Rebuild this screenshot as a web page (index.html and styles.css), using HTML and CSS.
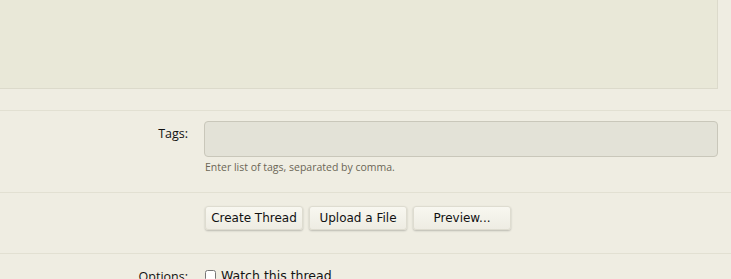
FILE: index.html
```html
<!DOCTYPE html>
<html lang="en">
<head>
    <meta charset="UTF-8">
    <title>Create Thread</title>
    <link rel="stylesheet" href="styles.css">
</head>
<body>
    <div class="editor-row">
        <div class="editor"></div>
    </div>

    <dl class="ctrl-unit tags-unit">
        <dt>Tags:</dt>
        <dd>
            <input type="text" class="text-ctrl">
            <p class="explain">Enter list of tags, separated by comma.</p>
        </dd>
    </dl>

    <dl class="ctrl-unit submit-unit">
        <dt></dt>
        <dd>
            <button class="button">Create Thread</button>
            <button class="button">Upload a File</button>
            <button class="button">Preview...</button>
        </dd>
    </dl>

    <dl class="ctrl-unit options-unit">
        <dt>Options:</dt>
        <dd>
            <label class="check"><input type="checkbox"> Watch this thread</label>
        </dd>
    </dl>
</body>
</html>
```

FILE: styles.css
```css
/* Page */
body {
    margin: 0;
    background-color: #efede2;
    font-family: 'DejaVu Sans', sans-serif;
    color: #141414;
    overflow: hidden;
}

.editor-row {
    height: 110px;
    border-bottom: 1px solid #e2e0d2;
}

.editor {
    width: 717px;
    height: 88px;
    background-color: #e9e8d8;
    border-right: 1px solid #dcdacb;
    border-bottom: 1px solid #dcdacb;
}

/* Form rows */
.ctrl-unit {
    display: flex;
    margin: 0;
    border-bottom: 1px solid #e2e0d2;
}

.ctrl-unit dt {
    width: 188px;
    text-align: right;
    font-family: 'Open Sans', sans-serif;
    font-size: 12.5px;
    color: #111;
}

.ctrl-unit dd {
    margin: 0 0 0 16px;
    flex: 1;
}

.tags-unit {
    height: 81px;
}

.tags-unit dt {
    margin-top: 14px;
}

.tags-unit dd {
    padding-top: 10px;
}

.text-ctrl {
    display: block;
    box-sizing: border-box;
    width: 514px;
    height: 36px;
    margin: 0;
    background-color: #e3e2d7;
    border: 1px solid #c9c7ba;
    border-radius: 4px;
}

.explain {
    margin: 3px 0 0 1px;
    font-family: 'Open Sans', sans-serif;
    font-size: 10.5px;
    color: #6b6656;
}

.submit-unit {
    height: 60px;
}

.submit-unit dd {
    display: flex;
    gap: 6px;
    padding-top: 13px;
    padding-left: 1px;
}

.button {
    width: 98px;
    height: 24px;
    padding: 0;
    font-family: 'DejaVu Sans', sans-serif;
    font-size: 12px;
    color: #111;
    background: linear-gradient(#f8f7f0, #eeece3);
    border: 1px solid #dedcd0;
    border-radius: 3px;
    box-shadow: 0 1px 2px rgba(0, 0, 0, 0.22);
}

.options-unit {
    border-bottom: none;
}

.options-unit dt {
    margin-top: 14px;
}

.options-unit dd {
    padding-top: 14px;
}

.check {
    display: flex;
    align-items: center;
    font-family: 'DejaVu Sans', sans-serif;
    font-size: 12.5px;
}

.check input {
    width: 11px;
    height: 11px;
    margin: 0 5px 0 1px;
}
```
